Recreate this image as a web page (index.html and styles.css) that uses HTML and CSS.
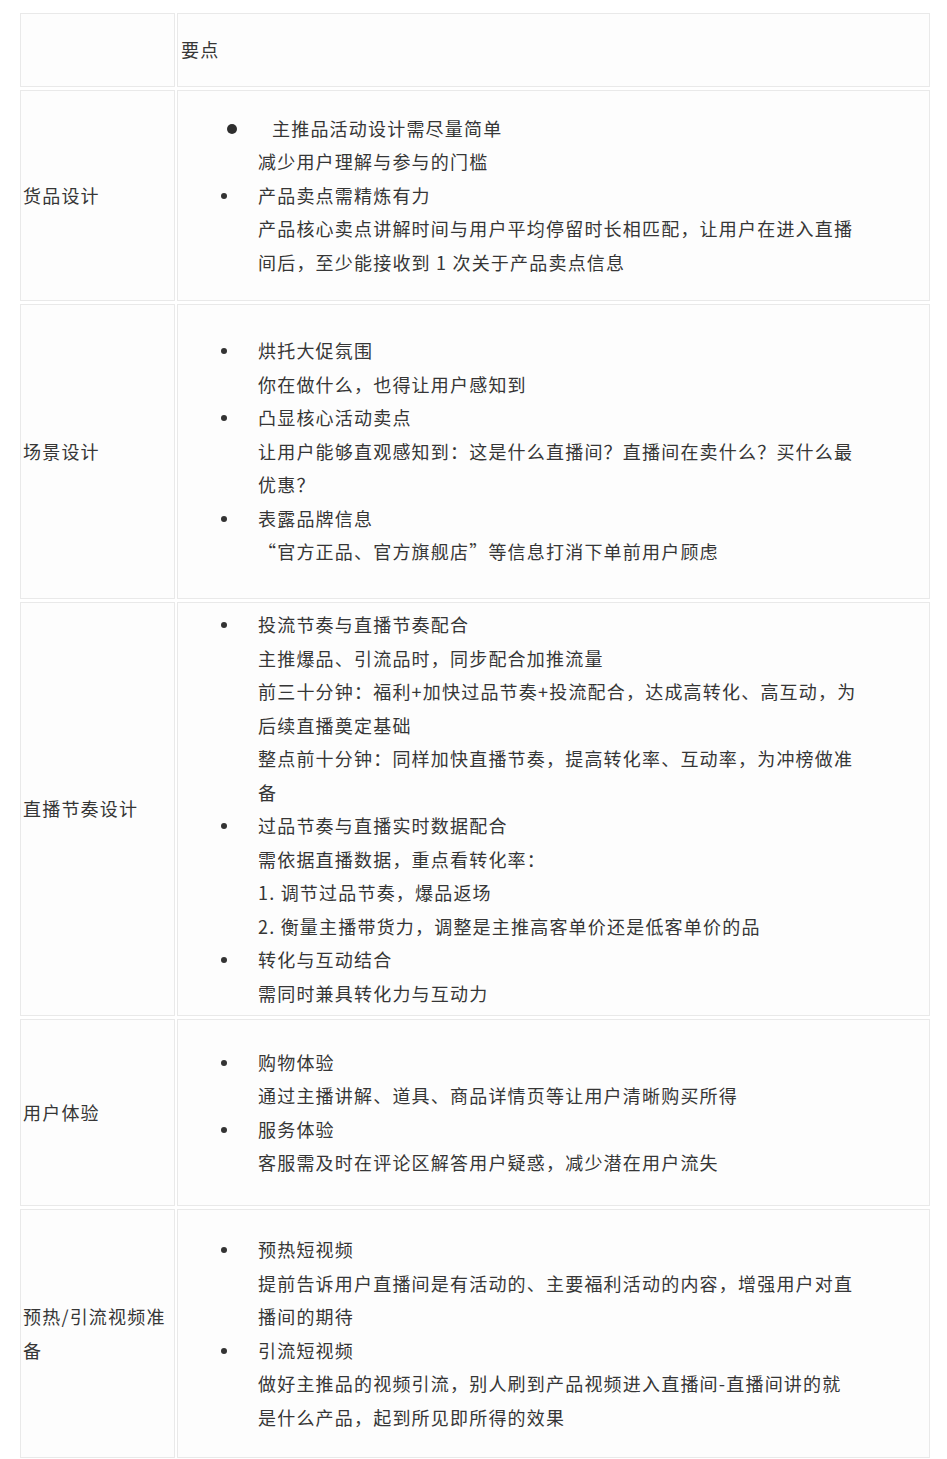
FILE: index.html
```html
<!DOCTYPE html>
<html lang="zh-CN">
<head>
<meta charset="utf-8">
<title>要点</title>
<link rel="stylesheet" href="styles.css">
</head>
<body>
<table class="grid">
  <colgroup><col class="c-left"><col class="c-right"></colgroup>
  <tr class="r-head">
    <td class="cell-l"></td>
    <td class="cell-r">要点</td>
  </tr>
  <tr class="r-1">
    <td class="cell-l">货品设计</td>
    <td class="cell-r">
      <ul class="items">
        <li class="item first"><span class="dot big"></span><div class="txt"><div class="title">主推品活动设计需尽量简单</div><div>减少用户理解与参与的门槛</div></div></li>
        <li class="item"><span class="dot"></span><div class="txt"><div>产品卖点需精炼有力</div><div>产品核心卖点讲解时间与用户平均停留时长相匹配，让用户在进入直播<br>间后，至少能接收到 1 次关于产品卖点信息</div></div></li>
      </ul>
    </td>
  </tr>
  <tr class="r-2">
    <td class="cell-l">场景设计</td>
    <td class="cell-r">
      <ul class="items">
        <li class="item"><span class="dot"></span><div class="txt"><div>烘托大促氛围</div><div>你在做什么，也得让用户感知到</div></div></li>
        <li class="item"><span class="dot"></span><div class="txt"><div>凸显核心活动卖点</div><div>让用户能够直观感知到：这是什么直播间？直播间在卖什么？买什么最<br>优惠？</div></div></li>
        <li class="item"><span class="dot"></span><div class="txt"><div>表露品牌信息</div><div>“官方正品、官方旗舰店”等信息打消下单前用户顾虑</div></div></li>
      </ul>
    </td>
  </tr>
  <tr class="r-3">
    <td class="cell-l">直播节奏设计</td>
    <td class="cell-r">
      <ul class="items">
        <li class="item"><span class="dot"></span><div class="txt"><div>投流节奏与直播节奏配合</div><div>主推爆品、引流品时，同步配合加推流量</div><div>前三十分钟：福利+加快过品节奏+投流配合，达成高转化、高互动，为<br>后续直播奠定基础</div><div>整点前十分钟：同样加快直播节奏，提高转化率、互动率，为冲榜做准<br>备</div></div></li>
        <li class="item"><span class="dot"></span><div class="txt"><div>过品节奏与直播实时数据配合</div><div>需依据直播数据，重点看转化率：</div><div>1. 调节过品节奏，爆品返场</div><div>2. 衡量主播带货力，调整是主推高客单价还是低客单价的品</div></div></li>
        <li class="item"><span class="dot"></span><div class="txt"><div>转化与互动结合</div><div>需同时兼具转化力与互动力</div></div></li>
      </ul>
    </td>
  </tr>
  <tr class="r-4">
    <td class="cell-l">用户体验</td>
    <td class="cell-r">
      <ul class="items">
        <li class="item"><span class="dot"></span><div class="txt"><div>购物体验</div><div>通过主播讲解、道具、商品详情页等让用户清晰购买所得</div></div></li>
        <li class="item"><span class="dot"></span><div class="txt"><div>服务体验</div><div>客服需及时在评论区解答用户疑惑，减少潜在用户流失</div></div></li>
      </ul>
    </td>
  </tr>
  <tr class="r-5">
    <td class="cell-l">预热/引流视频准<br>备</td>
    <td class="cell-r">
      <ul class="items">
        <li class="item"><span class="dot"></span><div class="txt"><div>预热短视频</div><div>提前告诉用户直播间是有活动的、主要福利活动的内容，增强用户对直<br>播间的期待</div></div></li>
        <li class="item"><span class="dot"></span><div class="txt"><div>引流短视频</div><div>做好主推品的视频引流，别人刷到产品视频进入直播间-直播间讲的就<br>是什么产品，起到所见即所得的效果</div></div></li>
      </ul>
    </td>
  </tr>
</table>
</body>
</html>
```

FILE: styles.css
```css
html, body {
  margin: 0;
  padding: 0;
  background: #ffffff;
}
body {
  padding: 10px 0 0 18px;
  font-family: "Noto Sans CJK SC", "Noto Sans", sans-serif;
  font-size: 18px;
  letter-spacing: 1.2px;
  color: #363636;
  line-height: 33.5px;
}
.grid {
  table-layout: fixed;
  border-collapse: separate;
  border-spacing: 2px 3px;
  width: 914px;
}
.c-left { width: 155px; }
.c-right { width: 753px; }
.grid td {
  box-sizing: border-box;
  border: 1px solid #e9e9e9;
  vertical-align: middle;
  padding: 0 3px;
  background: #fdfdfd;
}
.grid td.cell-l { padding-left: 2px; }
.r-head td { height: 74px; }
.r-1 td { height: 211px; }
.r-2 td { height: 295px; }
.r-3 td { height: 414px; }
.r-4 td { height: 187px; }
.r-5 td { height: 249px; }
.items {
  list-style: none;
  margin: 0;
  padding: 0;
}
.item {
  display: grid;
  grid-template-columns: 77px 1fr;
  align-items: start;
}
.dot {
  width: 6px;
  height: 6px;
  border-radius: 50%;
  background: #333;
  margin: 14px 0 0 40px;
}
.dot.big {
  width: 10px;
  height: 10px;
  margin: 12px 0 0 46px;
  background: #2e2e2e;
}
.txt {
  white-space: nowrap;
}
.first .title {
  padding-left: 14px;
}
```
